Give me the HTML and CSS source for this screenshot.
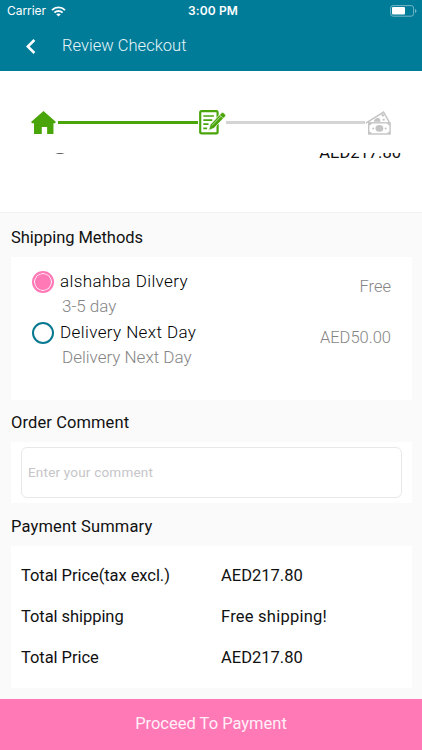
FILE: index.html
```html
<!DOCTYPE html>
<html lang="en">
<head>
<meta charset="utf-8">
<title>Review Checkout</title>
<link rel="stylesheet" href="styles.css">
</head>
<body>
<header class="top">
  <div class="status">
    <div class="carrier"><span>Carrier</span>
      <svg width="15" height="11" viewBox="0 0 15 11" fill="none" stroke="#fff" stroke-width="1.9"><path d="M1 4.1C4.7.5 10.3.5 14 4.1M3.4 6.6c2.3-2.2 5.9-2.2 8.2 0"/><path d="M5.2 8.3c1.3-1.2 3.3-1.2 4.6 0L7.5 10.6z" fill="#fff" stroke="none"/></svg>
    </div>
    <div class="clock">3:00 PM</div>
    <svg class="battery" width="27" height="12" viewBox="0 0 27 12"><rect x=".6" y=".6" width="23" height="10.6" rx="2.5" fill="none" stroke="#75b6c8"/><rect x="2" y="2" width="13" height="7.6" rx="1" fill="#fff"/><path d="M25 4v4q1.5-.5 1.5-2T25 4" fill="#75b6c8"/></svg>
  </div>
  <div class="nav">
    <svg width="10" height="15" viewBox="0 0 10 15" fill="none" stroke="#fff" stroke-width="2.6"><path d="M8.4 1 1.8 7.5 8.4 14"/></svg>
    <h1>Review Checkout</h1>
  </div>
</header>
<div class="steps">
  <svg class="home" width="25" height="23" viewBox="0 0 26 24" fill="#4aa50a"><path d="M13 0 26 11.6l-1.1 1.1h-1.5V24h-6.6v-7.3h-5.6V24H3.1V12.7H1L0 11.6z"/></svg>
  <div class="line done"></div>
  <svg class="edit" width="27" height="25" viewBox="0 0 27 25"><rect x="1.2" y="1.2" width="17.4" height="22.2" rx="1.2" fill="#fff" stroke="#4aa50a" stroke-width="2.2"/><path d="M4.3 6h10.6M4.3 10.1h9M4.3 14.2h5.2M4.3 18.4h3.8" stroke="#4aa50a" stroke-width="1.7"/><path d="M9.6 20.5 11.3 14.4 22.6 2.7q1-.8 2 .1l1.6 1.6q.9 1 0 2L15.1 18.2z" fill="#4aa50a" stroke="#fff" stroke-width=".8"/><path d="m13 15.4 9-9.2M20.6 4.9l3.6 3.5" stroke="#fff" stroke-width=".6"/></svg>
  <div class="line"></div>
  <svg class="cash" width="27" height="24" viewBox="0 0 27 24"><path d="M.8 12.2 18.6 1.1l5.6 10.1" fill="#fff" stroke="#c4c4c4" stroke-width="1.4"/><path d="m5 10.5-2 .7 3.5-2.3zM16 3.8l2.2-1.4 1.1 2.5-1.8.8zM8.8 10.8c.2-2.5 2-4 4.2-3.9 1.9.1 2.8 1.8 2.4 3.9z" fill="#c4c4c4"/><path d="m17.2 8.6 1.9-1 1 1.3-1.4 1" fill="#c4c4c4"/><rect x="3.7" y="11.8" width="21.4" height="11.2" fill="#fff" stroke="#c4c4c4" stroke-width="1.4"/><path d="M4 12h3q-.5 2.2-3 2.5zM25 12h-3q.5 2.2 3 2.5zM4 23h3q-.5-2.2-3-2.5zM25 23h-3q.5-2.2 3-2.5z" fill="#c4c4c4"/><ellipse cx="14.4" cy="17.4" rx="3.9" ry="3.3" fill="#c4c4c4"/><circle cx="8.2" cy="17.4" r="1" fill="#c4c4c4"/><circle cx="20.6" cy="17.4" r="1" fill="#c4c4c4"/></svg>
</div>
<main>
  <div class="previous"><i class="oval"></i><span>AED217.80</span></div>
  <h2 class="h-ship">Shipping Methods</h2>
  <section class="card shipping">
    <div class="method">
      <i class="radio on"></i>
      <div class="info"><div class="name">alshahba Dilvery</div><div class="detail">3-5 day</div></div>
      <div class="price">Free</div>
    </div>
    <div class="method">
      <i class="radio"></i>
      <div class="info"><div class="name">Delivery Next Day</div><div class="detail">Delivery Next Day</div></div>
      <div class="price">AED50.00</div>
    </div>
  </section>
  <h2 class="h-comment">Order Comment</h2>
  <section class="card comment"><div class="field">Enter your comment</div></section>
  <h2 class="h-pay">Payment Summary</h2>
  <section class="card summary">
    <div class="row"><span class="label">Total Price(tax excl.)</span><span>AED217.80</span></div>
    <div class="row"><span class="label">Total shipping</span><span class="free">Free shipping!</span></div>
    <div class="row"><span class="label">Total Price</span><span>AED217.80</span></div>
  </section>
</main>
<footer>Proceed To Payment</footer>
</body>
</html>
```
FILE: styles.css
```css
* { box-sizing: border-box; }
body { margin: 0; width: 422px; height: 750px; overflow: hidden; display: flex; flex-direction: column; background: #fafafa; font-family: Roboto, "Liberation Sans", sans-serif; color: #111; white-space: nowrap; }
svg { display: block; flex: none; }
h1, h2 { margin: 0; }
.top { height: 71px; flex: none; background: #007b98; color: #fff; }
.status { height: 22px; display: grid; grid-template-columns: 1fr auto 1fr; align-items: center; padding: 0 5px 0 7px; font: 12px/22px Inter, sans-serif; }
.carrier { display: flex; align-items: center; gap: 5px; letter-spacing: -.05px; }
.clock { font-weight: 600; letter-spacing: .15px; padding-left: 2px; }
.battery { justify-self: end; }
.nav { height: 49px; display: flex; align-items: center; gap: 26px; padding: 0 0 2px 26px; }
.nav svg { margin-top: 2px; }
h1 { font-size: 16.5px; font-weight: 300; letter-spacing: .03px; line-height: 24px; color: #e5f5f9; }
.steps { height: 82px; flex: none; display: flex; align-items: center; background: #fff; padding: 21px 30px 0 31px; }
.line { height: 3px; flex: 1; background: #d4d4d4; }
.line.done { background: #4aa50a; margin: 0 1px 0 2px; }
main { flex: 1; min-height: 0; overflow: hidden; }
.previous { height: 60px; display: flex; justify-content: space-between; overflow: hidden; padding: 0 21px 0 49px; background: #fff; border-bottom: 1px solid #f2f2f2; }
.previous span { font-size: 16.5px; line-height: 20px; margin-top: -10px; }
.oval { width: 22px; height: 22px; border: 2px solid #555; border-radius: 50%; margin-top: -21px; }
h2 { height: 44px; padding-left: 11px; font-size: 16.5px; line-height: 50px; font-weight: 400; letter-spacing: -.05px; }
.card { margin: 0 11px; width: 401px; background: #fff; }
.shipping { height: 143px; padding: 12px 21px 0; }
.method { height: 51px; display: flex; }
.radio { width: 22px; height: 22px; flex: none; border-radius: 50%; border: 2px solid #087990; margin-top: 2px; }
.radio.on { border-color: #ff79b7; background: #ff79b7; box-shadow: inset 0 0 0 1px #fff; }
.info { margin-left: 6px; flex: 1; }
.name { font-size: 17px; line-height: 24px; font-weight: 300; color: #000; letter-spacing: .4px; }
.detail { font-size: 17px; line-height: 26px; padding-left: 2px; font-weight: 300; color: #858585; }
.price { font-size: 16.5px; line-height: 24px; margin-top: 6px; font-weight: 300; color: #858585; }
.h-comment { height: 42px; line-height: 46px; letter-spacing: .1px; }
.comment { height: 61px; padding: 5px 10px; }
.field { height: 51px; width: 381px; border: 1px solid #e8e8e8; border-radius: 6px; padding-left: 6px; font-size: 13.5px; letter-spacing: .2px; line-height: 49px; color: #c5c5c8; }
.h-pay { height: 43px; line-height: 47px; letter-spacing: .15px; }
.summary { height: 142px; padding: 9px 10px; }
.row { height: 41px; display: grid; grid-template-columns: 200px 1fr; font-size: 16.5px; line-height: 41px; }
.label { letter-spacing: -.06px; }
.free { letter-spacing: .23px; }
footer { height: 51px; flex: none; background: #ff79b7; color: #fff0f7; text-align: center; font-size: 16.5px; line-height: 49px; }
```
